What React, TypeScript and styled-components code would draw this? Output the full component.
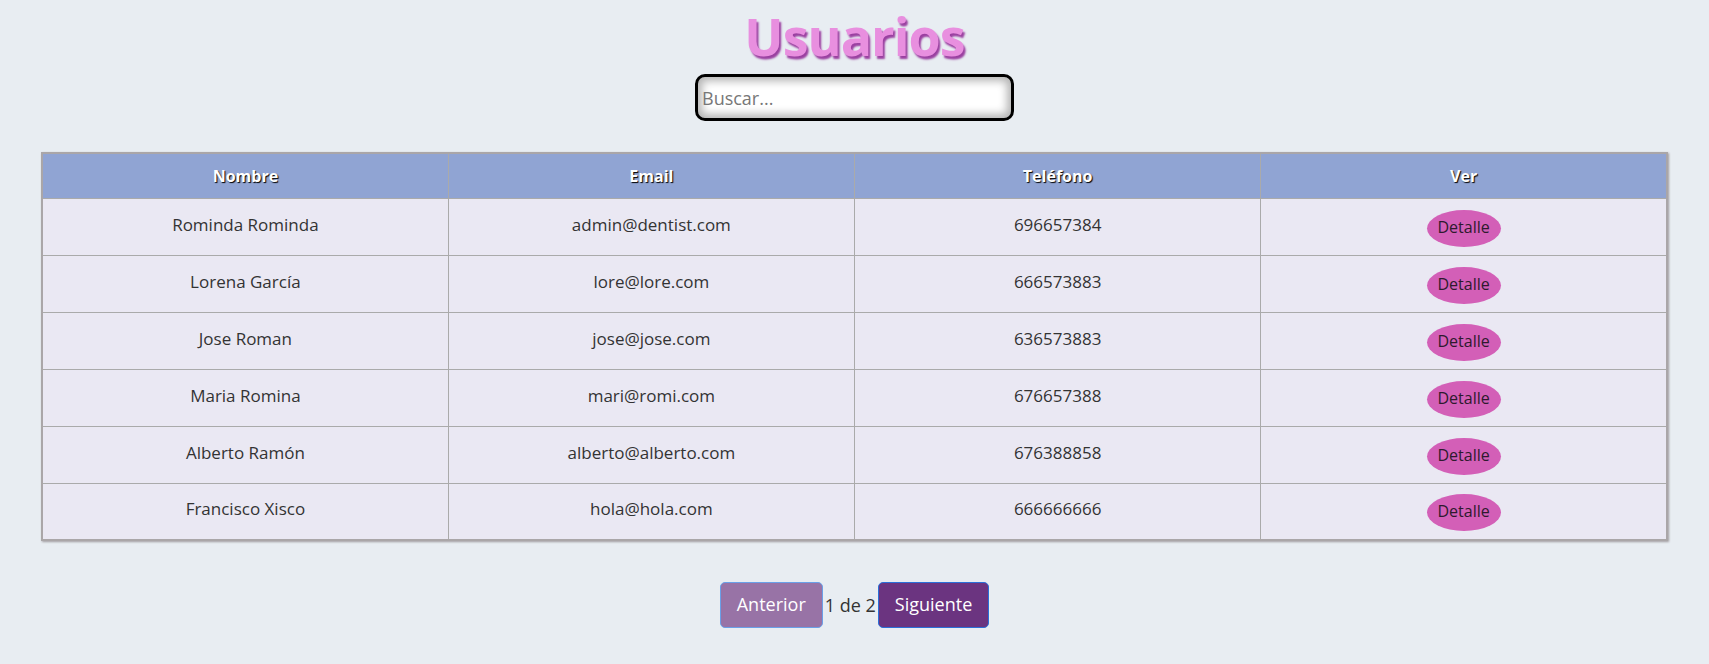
import React, { useState } from "react";
import styled, { createGlobalStyle } from "styled-components";

const GlobalStyle = createGlobalStyle`
  html, body {
    margin: 0;
    padding: 0;
    background: #e8edf2;
    font-family: "Open Sans", "Noto Sans", sans-serif;
  }
  * { box-sizing: border-box; }
`;

const Page = styled.div`
  display: flex;
  flex-direction: column;
  align-items: center;
  padding: 0 41px;
  min-height: 664px;
`;

const Title = styled.h1`
  margin: 5px 0 0;
  font-family: "Open Sans", "Noto Sans", sans-serif;
  font-size: 52px;
  font-weight: 700;
  line-height: 62px;
  letter-spacing: -1px;
  color: #e88fdf;
  text-shadow: 2px 3px 2px #9a3fa0;
`;

const Search = styled.input`
  margin-top: 7px;
  width: 319px;
  height: 47px;
  border: 3px solid #000;
  border-radius: 10px;
  background: #fff;
  box-shadow: inset 0 0 9px 4px #b4b4b4;
  padding: 0 4px;
  font-family: "Open Sans", "Noto Sans", sans-serif;
  font-size: 18px;
  color: #333;
  outline: none;
  &::placeholder { color: #777; }
`;

const Table = styled.table`
  margin-top: 31px;
  width: 100%;
  border-collapse: collapse;
  table-layout: fixed;
  border: 2px solid #aaa6a8;
  box-shadow: 1px 1px 2px #a09ca0;
`;

const Th = styled.th`
  height: 45px;
  background: #90a4d3;
  color: #fff;
  font-size: 16px;
  font-weight: 700;
  text-shadow: 1px 1px 1px #000;
  border: 1px solid #aaa;
  border-top: none;
  padding: 0;
`;

const Td = styled.td`
  height: 57px;
  background: #eae8f3;
  color: #333;
  font-size: 17px;
  text-align: center;
  border: 1px solid #aaa;
  padding: 0 0 5px;
`;

const DetailButton = styled.button`
  width: 74px;
  height: 37px;
  margin-top: 8px;
  border: none;
  border-radius: 50%;
  background: #d35fb7;
  color: #2e1a2e;
  font-family: "Open Sans", "Noto Sans", sans-serif;
  font-size: 16px;
  padding: 0 0 3px;
  cursor: pointer;
`;

const Pagination = styled.div`
  margin-top: 41px;
  display: flex;
  align-items: center;
  gap: 2px;
  font-size: 18px;
  color: #333;
`;

const PageButton = styled.button<{ $active?: boolean }>`
  height: 46px;
  padding: 0 16px 2px;
  border-radius: 5px;
  border: 1px solid ${(p) => (p.$active ? "#2b6fd8" : "#6aa0e8")};
  background: ${(p) => (p.$active ? "#6b3480" : "#9873a6")};
  color: #fff;
  font-family: "Open Sans", "Noto Sans", sans-serif;
  font-size: 18px;
  cursor: pointer;
`;

const users = [
  { name: "Rominda Rominda", email: "admin@dentist.com", phone: "696657384" },
  { name: "Lorena García", email: "lore@lore.com", phone: "666573883" },
  { name: "Jose Roman", email: "jose@jose.com", phone: "636573883" },
  { name: "Maria Romina", email: "mari@romi.com", phone: "676657388" },
  { name: "Alberto Ramón", email: "alberto@alberto.com", phone: "676388858" },
  { name: "Francisco Xisco", email: "hola@hola.com", phone: "666666666" },
];

export default function App() {
  const [q, setQ] = useState("");
  return (
    <>
      <GlobalStyle />
      <Page>
        <Title>Usuarios</Title>
        <Search placeholder="Buscar..." value={q} onChange={(e) => setQ(e.target.value)} />
        <Table>
          <thead>
            <tr>
              <Th>Nombre</Th>
              <Th>Email</Th>
              <Th>Teléfono</Th>
              <Th>Ver</Th>
            </tr>
          </thead>
          <tbody>
            {users.map((u) => (
              <tr key={u.email}>
                <Td>{u.name}</Td>
                <Td>{u.email}</Td>
                <Td>{u.phone}</Td>
                <Td>
                  <DetailButton>Detalle</DetailButton>
                </Td>
              </tr>
            ))}
          </tbody>
        </Table>
        <Pagination>
          <PageButton>Anterior</PageButton>
          <span>1 de 2</span>
          <PageButton $active>Siguiente</PageButton>
        </Pagination>
      </Page>
    </>
  );
}
